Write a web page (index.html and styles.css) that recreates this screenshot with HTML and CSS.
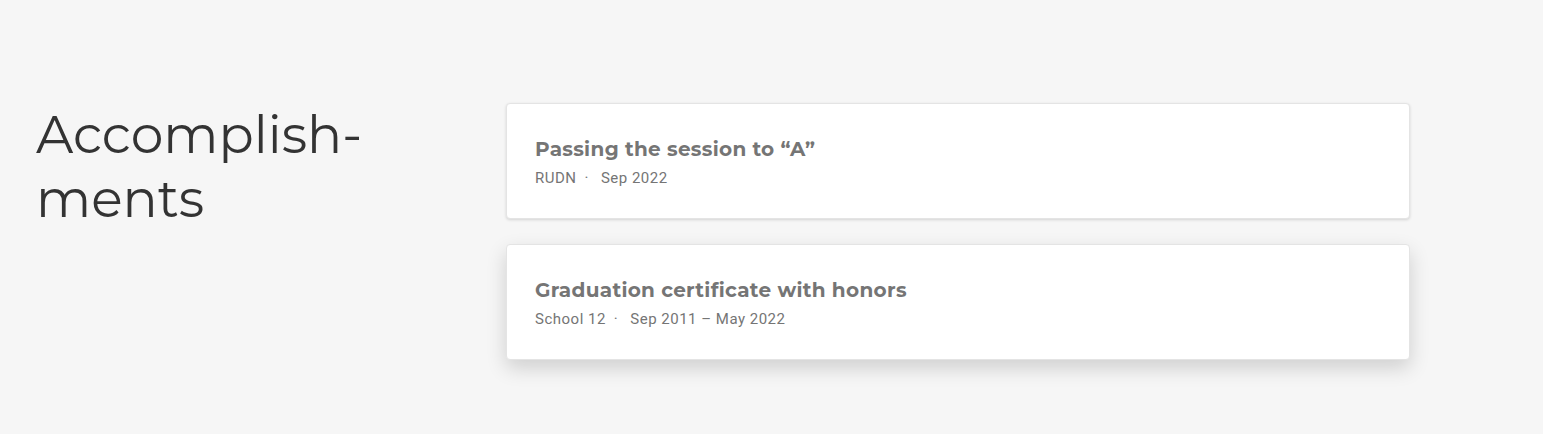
FILE: index.html
```html
<!DOCTYPE html>
<html lang="en">
<head>
<meta charset="utf-8">
<title>Accomplishments</title>
<link rel="stylesheet" href="styles.css">
</head>
<body>
<section class="section">
  <h2 class="section-title">Accomplish-<br>ments</h2>
  <div class="cards">
    <article class="card">
      <h3 class="card-title">Passing the session to “A”</h3>
      <p class="card-meta"><span>RUDN</span><span class="dot">·</span><span>Sep 2022</span></p>
    </article>
    <article class="card card-raised">
      <h3 class="card-title">Graduation certificate with honors</h3>
      <p class="card-meta"><span>School 12</span><span class="dot">·</span><span>Sep 2011 – May 2022</span></p>
    </article>
  </div>
</section>
</body>
</html>
```

FILE: styles.css
```css
html, body {
  margin: 0;
  padding: 0;
  background: #f6f6f6;
}
body {
  height: 434px;
  overflow: hidden;
}
.section {
  display: flex;
  align-items: flex-start;
  padding: 103px 0 0 36px;
}
.section-title {
  width: 470px;
  flex: none;
  margin: 0;
  font-family: Montserrat, "Open Sans", sans-serif;
  font-weight: 400;
  font-size: 52px;
  line-height: 64px;
  color: #333333;
}
.cards {
  width: 904px;
  display: flex;
  flex-direction: column;
  gap: 25px;
}
.card {
  background: #ffffff;
  border: 1px solid #e4e4e4;
  border-radius: 4px;
  padding: 32px 28px 31px;
  box-shadow: 0 1px 3px rgba(0,0,0,0.14);
}
.card-raised {
  box-shadow: 0 8px 20px rgba(0,0,0,0.16);
}
.card-title {
  margin: 0;
  font-family: Montserrat, "Open Sans", sans-serif;
  font-weight: 700;
  font-size: 20px;
  letter-spacing: 0.3px;
  line-height: 26px;
  color: #757575;
}
.card-meta {
  margin: 7px 0 0;
  font-family: Roboto, sans-serif;
  font-size: 15px;
  letter-spacing: 0.5px;
  line-height: 18px;
  color: #757575;
  display: flex;
}
.dot {
  margin: 0 12px 0 8px;
}
```
